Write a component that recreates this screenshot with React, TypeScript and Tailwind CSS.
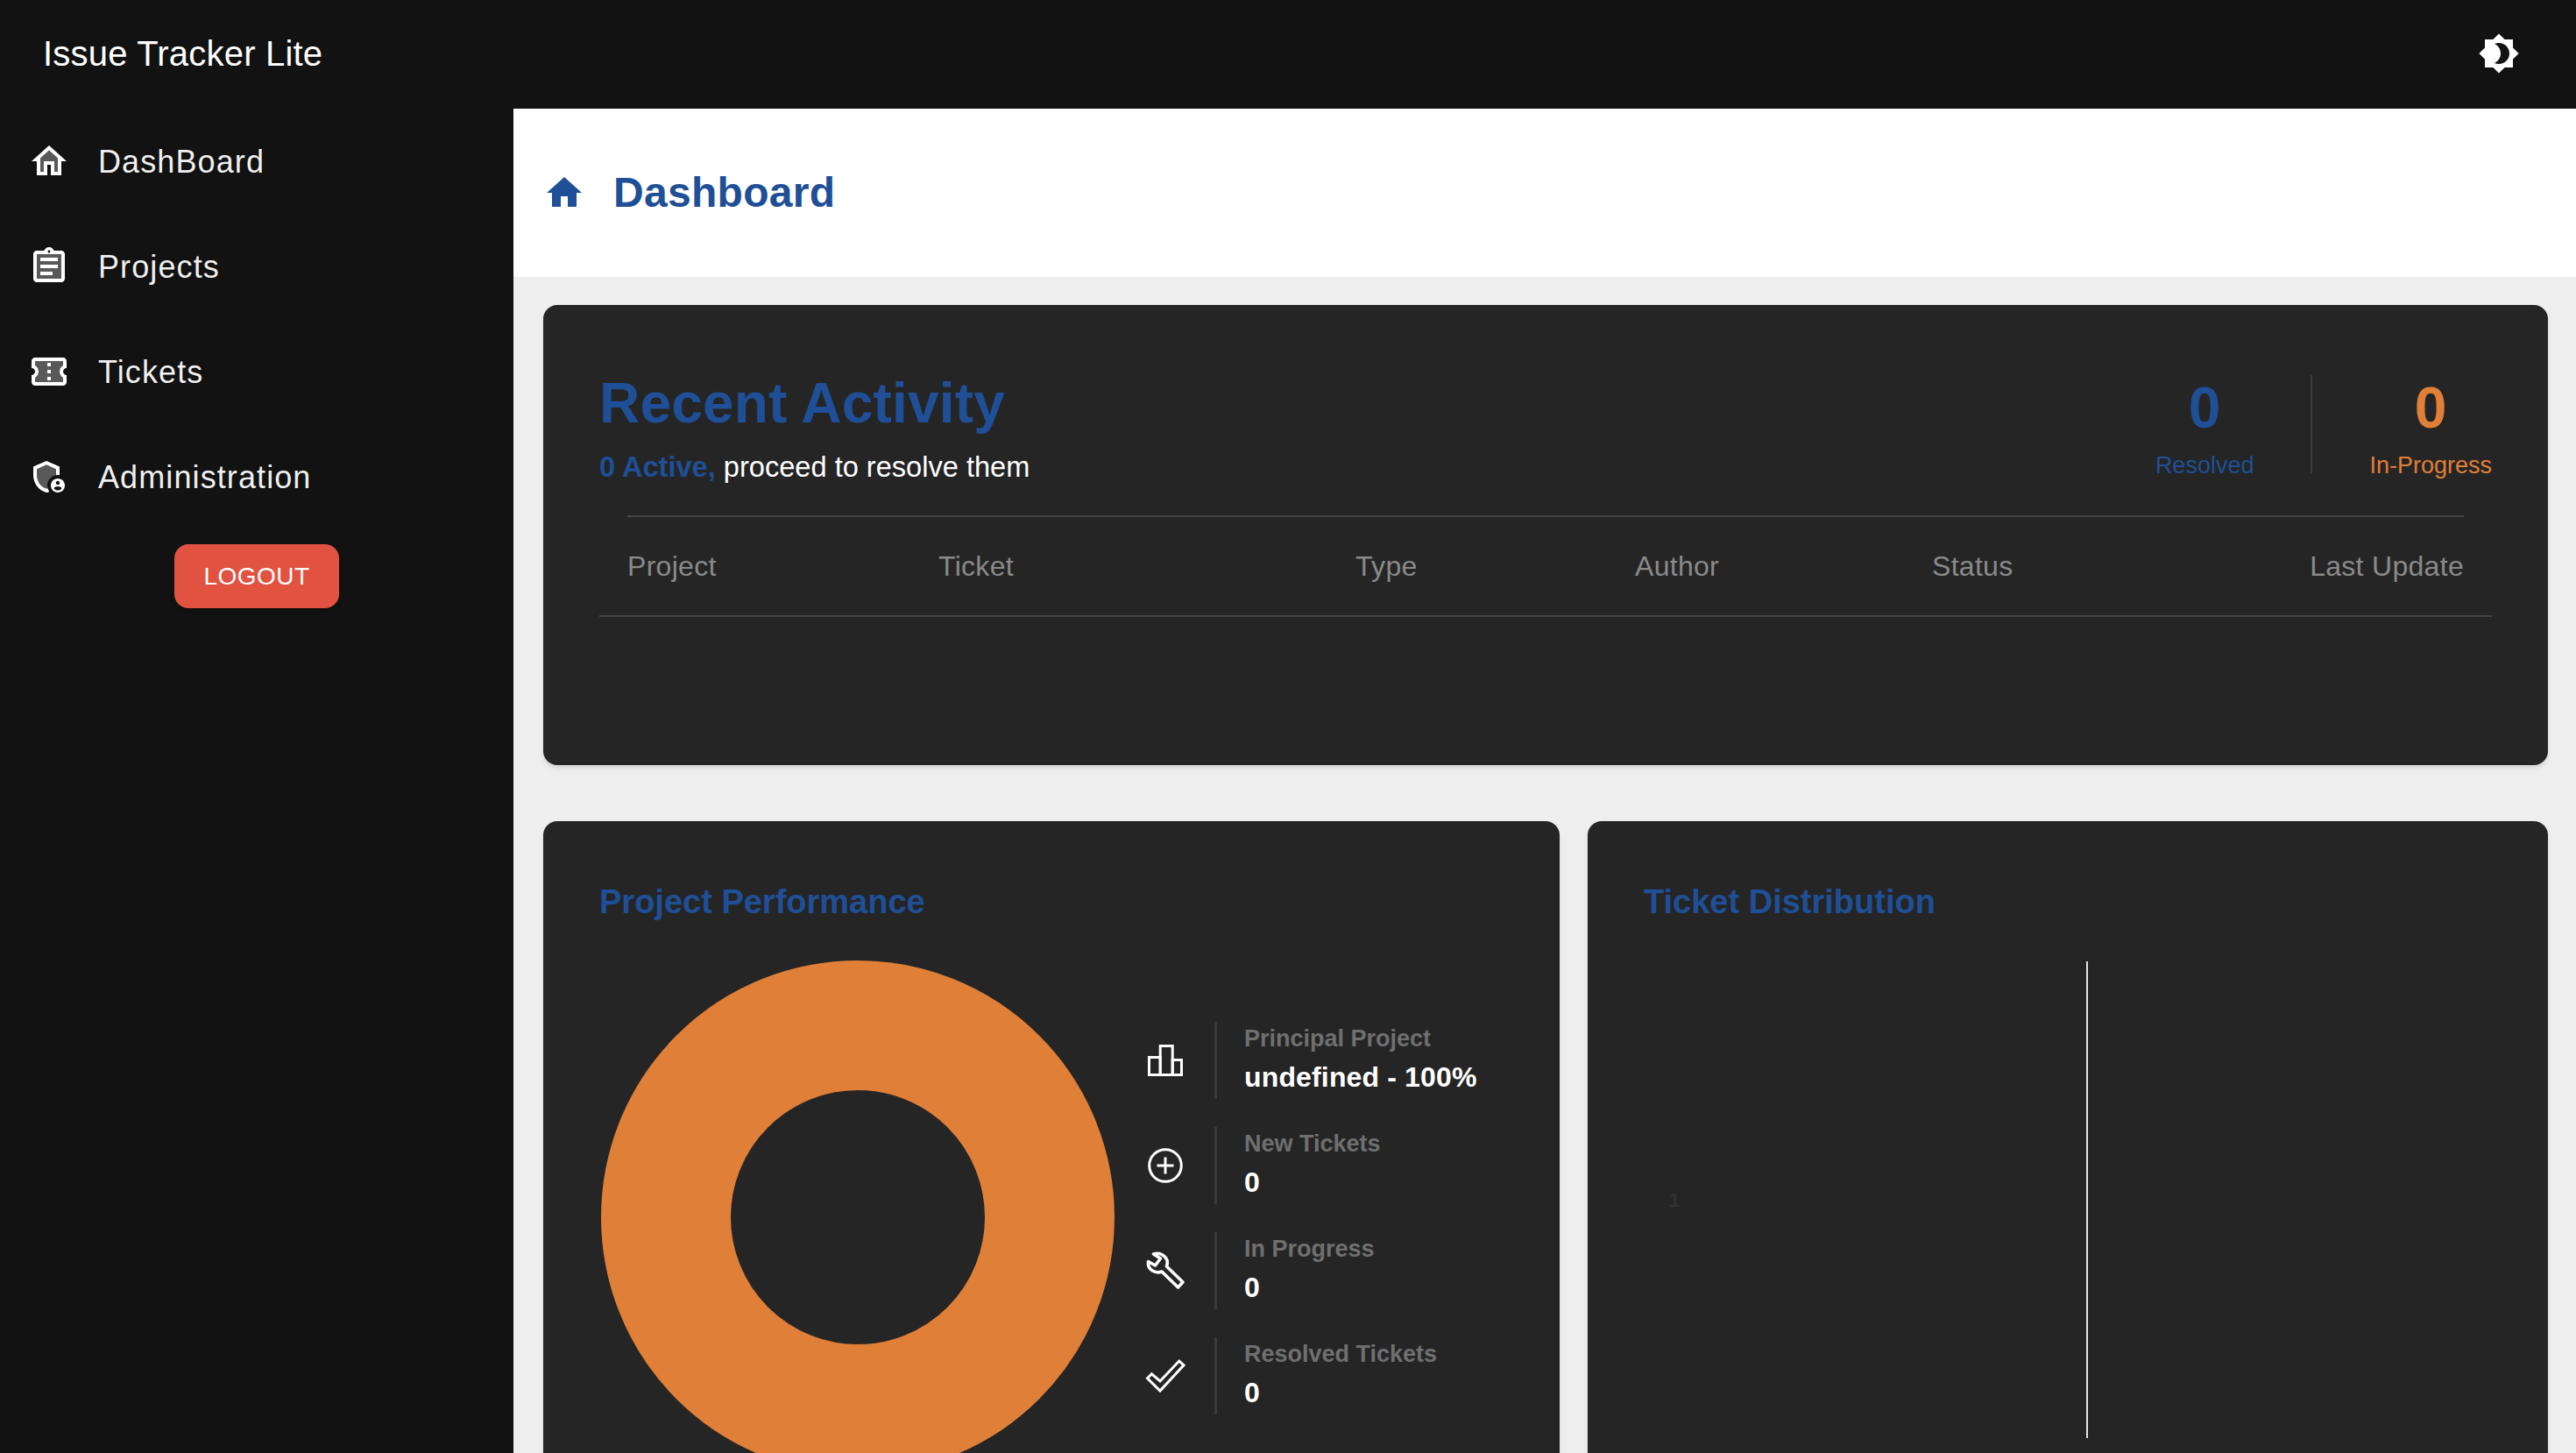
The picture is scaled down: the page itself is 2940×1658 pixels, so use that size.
import React from 'react';

const BLUE = '#1f4f96';

const HomeIcon = ({ className }: { className?: string }) => (
  <svg viewBox="0 0 24 24" className={className} fill="currentColor">
    <path d="M10 20v-6h4v6h5v-8h3L12 3 2 12h3v8z" />
  </svg>
);

const HomeTwoTone = () => (
  <svg viewBox="0 0 24 24" className="w-12 h-12" fill="currentColor">
    <path opacity=".3" d="M7 10.19V18h2v-6h6v6h2v-7.81l-5-4.5z" />
    <path d="M12 3 2 12h3v8h6v-6h2v6h6v-8h3L12 3zm5 15h-2v-6H9v6H7v-7.81l5-4.5 5 4.5V18z" />
  </svg>
);

const AssignmentTwoTone = () => (
  <svg viewBox="0 0 24 24" className="w-12 h-12" fill="currentColor">
    <path opacity=".3" d="M5 5v14h14V5H5zm9 12H7v-2h7v2zm3-4H7v-2h10v2zm0-4H7V7h10v2z" />
    <path d="M7 15h7v2H7zm0-4h10v2H7zm0-4h10v2H7zm12-4h-4.18C14.4 1.84 13.3 1 12 1c-1.3 0-2.4.84-2.82 2H5c-.14 0-.27.01-.4.04-.39.08-.74.28-1.01.55-.18.18-.33.4-.43.64-.1.23-.16.49-.16.77v14c0 .27.06.54.16.78s.25.45.43.64c.27.27.62.47 1.01.55.13.02.26.03.4.03h14c1.1 0 2-.9 2-2V5c0-1.1-.9-2-2-2zm-7-.25c.41 0 .75.34.75.75s-.34.75-.75.75-.75-.34-.75-.75.34-.75.75-.75zM19 19H5V5h14v14z" />
  </svg>
);

const TicketTwoTone = () => (
  <svg viewBox="0 0 24 24" className="w-12 h-12" fill="currentColor">
    <path opacity=".3" d="M4.01 8.54C5.2 9.23 6 10.52 6 12c0 1.47-.81 2.77-2 3.46V18h16v-2.54c-1.19-.69-2-1.99-2-3.46s.81-2.77 2-3.46V6H4l.01 2.54zM11 7h2v2h-2V7zm0 4h2v2h-2v-2zm0 4h2v2h-2v-2z" />
    <path d="M22 10V6c0-1.1-.9-2-2-2H4c-1.1 0-1.99.9-1.99 2v4c1.1 0 1.99.9 1.99 2s-.89 2-2 2v4c0 1.1.9 2 2 2h16c1.1 0 2-.9 2-2v-4c-1.1 0-2-.9-2-2s.9-2 2-2zm-2-1.46c-1.19.69-2 1.99-2 3.46s.81 2.77 2 3.46V18H4v-2.54c1.19-.69 2-1.99 2-3.46 0-1.48-.8-2.77-1.99-3.46L4 6h16v2.54zM11 15h2v2h-2zm0-4h2v2h-2zm0-4h2v2h-2z" />
  </svg>
);

const AdminTwoTone = () => (
  <svg viewBox="0 0 24 24" className="w-12 h-12" fill="currentColor">
    <path opacity=".3" d="M11 17c0-3.31 2.69-6 6-6 .34 0 .67.04 1 .09V6.27L10.5 3 3 6.27v4.91c0 4.54 3.2 8.79 7.5 9.82.55-.13 1.08-.32 1.6-.55-.69-.98-1.1-2.17-1.1-3.45z" />
    <path d="M11 17c0 1.28.41 2.47 1.1 3.45-.52.23-1.05.42-1.6.55C6.2 19.97 3 15.72 3 11.18V6.27L10.5 3 18 6.27v4.82c-.33-.05-.66-.09-1-.09-.34 0-.67.03-1 .08V7.58l-5.5-2.4L5 7.58v3.6c0 3.4 2.3 6.9 5.5 7.74.3-.08.6-.18.85-.3-.2-.5-.35-1.05-.35-1.62z" />
    <path d="M17 13c-2.21 0-4 1.79-4 4s1.79 4 4 4 4-1.79 4-4-1.79-4-4-4zm0 1.38c.62 0 1.12.51 1.12 1.12s-.51 1.12-1.12 1.12-1.12-.51-1.12-1.12.5-1.12 1.12-1.12zm0 5.37c-.93 0-1.74-.46-2.24-1.17.05-.72 1.51-1.08 2.24-1.08s2.19.36 2.24 1.08c-.5.71-1.31 1.17-2.24 1.17z" />
  </svg>
);

const Brightness4 = () => (
  <svg viewBox="0 0 24 24" className="w-12 h-12" fill="currentColor">
    <path d="M20 8.69V4h-4.69L12 .69 8.69 4H4v4.69L.69 12 4 15.31V20h4.69L12 23.31 15.31 20H20v-4.69L23.31 12 20 8.69zM12 18c-.89 0-1.74-.2-2.5-.55C11.56 16.5 13 14.42 13 12s-1.44-4.5-3.5-5.45C10.26 6.2 11.11 6 12 6c3.31 0 6 2.69 6 6s-2.69 6-6 6z" />
  </svg>
);

const BarsIcon = () => (
  <svg viewBox="0 0 48 48" className="w-12 h-12" fill="none" stroke="currentColor" strokeWidth="3">
    <rect x="5.5" y="20.5" width="12.7" height="20" />
    <rect x="18.2" y="7.5" width="14" height="33" />
    <rect x="32.2" y="23.5" width="10.3" height="17" />
  </svg>
);

const PlusIcon = () => (
  <svg viewBox="0 0 48 48" className="w-12 h-12" fill="none" stroke="currentColor" strokeWidth="3">
    <circle cx="24" cy="24" r="18.3" />
    <path d="M24 14.5v19M14.5 24h19" />
  </svg>
);

const WrenchIcon = () => (
  <svg viewBox="0 0 48 48" className="w-12 h-12" fill="none" stroke="currentColor" strokeWidth="3.6" strokeLinejoin="round">
    <path d="M4.5 13.5 12.5 18 18.5 10 10.5 5C17 2.5 24 6.5 26 12c.7 2.4.5 4.6-.6 7L44 37l-5.5 6L20 25C13.5 27.5 3 23.5 4.5 13.5z" />
  </svg>
);

const CheckIcon = () => (
  <svg viewBox="0 0 48 48" className="w-12 h-12" fill="none" stroke="currentColor" strokeWidth="3" strokeLinejoin="miter">
    <path d="M3.5 26.7 8.4 21.8 18 30 39.8 7 45 11.8 18 41z" />
  </svg>
);

const navItems = [
  { label: 'DashBoard', icon: <HomeTwoTone /> },
  { label: 'Projects', icon: <AssignmentTwoTone /> },
  { label: 'Tickets', icon: <TicketTwoTone /> },
  { label: 'Administration', icon: <AdminTwoTone /> },
];

const columns = [
  { label: 'Project', width: 'w-[355px]' },
  { label: 'Ticket', width: 'w-[476px]' },
  { label: 'Type', width: 'w-[319px]' },
  { label: 'Author', width: 'w-[339px]' },
  { label: 'Status', width: 'flex-1' },
];

const stats = [
  { label: 'Principal Project', value: 'undefined - 100%', icon: <BarsIcon /> },
  { label: 'New Tickets', value: '0', icon: <PlusIcon /> },
  { label: 'In Progress', value: '0', icon: <WrenchIcon /> },
  { label: 'Resolved Tickets', value: '0', icon: <CheckIcon /> },
];

const App: React.FC = () => {
  return (
    <div className="h-screen overflow-hidden flex flex-col bg-[#eeeeee] font-['Liberation_Sans',Arial,sans-serif]">
      <header className="h-[124px] shrink-0 bg-[#121212] text-white flex items-center justify-between pl-[49px] pr-[64px] pb-[2px]">
        <h1 className="text-[40px] tracking-[0.2px] leading-none">Issue Tracker Lite</h1>
        <Brightness4 />
      </header>

      <div className="flex flex-1 min-h-0">
        <aside className="w-[586px] shrink-0 bg-[#121212] text-white">
          <nav>
            {navItems.map((item) => (
              <div key={item.label} className="h-[120px] flex items-center pl-8">
                <div className="w-[80px] shrink-0">{item.icon}</div>
                <span className="text-[36px] tracking-[1.1px] text-white/95 pt-[2px]">{item.label}</span>
              </div>
            ))}
          </nav>
          <div className="flex justify-center mt-[17px]">
            <button className="w-[188px] h-[73px] rounded-[16px] bg-[#e25241] text-white text-[28px] tracking-[0.5px] shadow-md">
              LOGOUT
            </button>
          </div>
        </aside>

        <main className="flex-1 min-w-0">
          <div className="h-[192px] bg-white flex items-center pl-[34px] text-[#1f4f96]">
            <HomeIcon className="w-12 h-12" />
            <h2 className="ml-[32px] text-[48px] font-bold leading-none tracking-[0.3px]">Dashboard</h2>
          </div>

          <div className="pl-[34px] pr-[32px] pt-[32px]">
            <section className="h-[525px] rounded-[16px] bg-[#252525] shadow-md px-[64px] pt-[76px]">
              <div className="flex justify-between h-[164px] items-start">
                <div>
                  <h3 className="text-[64px] font-bold leading-[72px] tracking-[0.2px]" style={{ color: BLUE }}>Recent Activity</h3>
                  <p className="text-[32.6px] leading-[40px] mt-[17px] text-white">
                    <span className="font-bold" style={{ color: BLUE }}>0 Active, </span>
                    proceed to resolve them
                  </p>
                </div>
                <div className="flex mt-[4px]">
                  <div className="pr-[65px] text-center text-[#1f4f96]">
                    <div className="text-[66px] font-bold leading-[70px] mt-[2px]">0</div>
                    <div className="text-[27px] leading-[32px] mt-[15px]">Resolved</div>
                  </div>
                  <div className="w-[2px] h-[112px] bg-[#3d3d3d]" />
                  <div className="pl-[65px] text-center text-[#e07f38]">
                    <div className="text-[66px] font-bold leading-[70px] mt-[2px]">0</div>
                    <div className="text-[27px] leading-[32px] mt-[15px]">In-Progress</div>
                  </div>
                </div>
              </div>

              <div className="border-b-2 border-[#444444]">
                <div className="mx-[32px] h-[114px] border-t-2 border-[#444444] flex items-center text-[32px] tracking-[0.3px] text-[#8a8a8a]">
                  {columns.map((col) => (
                    <div key={col.label} className={col.width}>{col.label}</div>
                  ))}
                  <div className="text-right">Last Update</div>
                </div>
              </div>
            </section>

            <div className="flex gap-[32px] mt-[64px]">
              <section className="w-[1160px] shrink-0 h-[780px] rounded-[16px] bg-[#252525] shadow-md px-[64px] pt-[69px]">
                <h3 className="text-[38px] font-bold leading-[46px]" style={{ color: BLUE }}>Project Performance</h3>
                <div className="flex mt-[43px]">
                  <svg viewBox="0 0 590 590" className="w-[590px] h-[590px] shrink-0">
                    <circle cx="295" cy="294" r="219" fill="none" stroke="#e07f38" strokeWidth="148" />
                  </svg>
                  <div className="ml-[32px] pt-[71px]">
                    {stats.map((stat) => (
                      <div key={stat.label} className="h-[120px] flex items-start text-white">
                        <div className="h-[88px] flex items-center">{stat.icon}</div>
                        <div className="w-[3px] h-[88px] bg-[#3a3a3a] ml-[32px]" />
                        <div className="ml-[31px]">
                          <div className="text-[27px] font-bold leading-[38px] text-[#6f6f6f]">{stat.label}</div>
                          <div className="text-[32px] font-bold leading-[50px] tracking-[0.15px]">{stat.value}</div>
                        </div>
                      </div>
                    ))}
                  </div>
                </div>
              </section>

              <section className="flex-1 min-w-0 h-[780px] rounded-[16px] bg-[#252525] shadow-md px-[64px] pt-[69px]">
                <h3 className="text-[38px] font-bold leading-[46px]" style={{ color: BLUE }}>Ticket Distribution</h3>
                <div className="flex mt-[45px] h-[544px]">
                  <div className="w-[505px] relative">
                    <span className="absolute left-[29px] top-[256px] text-[22px] text-[#363636]">1</span>
                  </div>
                  <div className="w-[2px] h-full bg-[#e5e5e5]" />
                </div>
              </section>
            </div>
          </div>
        </main>
      </div>
    </div>
  );
};

export default App;
